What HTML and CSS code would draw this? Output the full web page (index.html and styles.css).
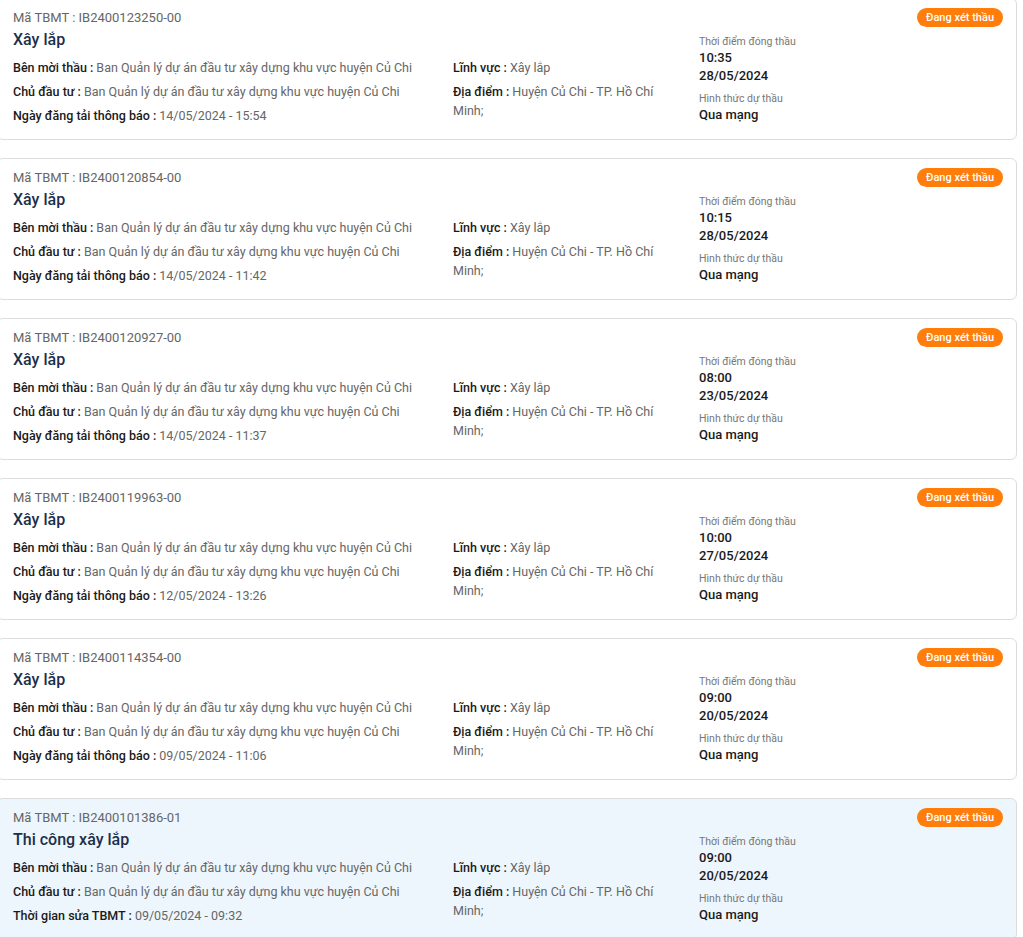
FILE: index.html
```html
<!DOCTYPE html>
<html lang="vi">
<head>
<meta charset="utf-8">
<title>Danh sách TBMT</title>
<link rel="stylesheet" href="styles.css">
</head>
<body>
<div class="list">

  <div class="card">
    <div class="main">
      <div class="code">Mã TBMT : IB2400123250-00</div>
      <div class="title">Xây lắp</div>
      <div class="fields">
        <div class="col-left">
          <div class="row"><b>Bên mời thầu :</b> Ban Quản lý dự án đầu tư xây dựng khu vực huyện Củ Chi</div>
          <div class="row"><b>Chủ đầu tư :</b> Ban Quản lý dự án đầu tư xây dựng khu vực huyện Củ Chi</div>
          <div class="row"><b>Ngày đăng tải thông báo :</b> 14/05/2024 - 15:54</div>
        </div>
        <div class="col-mid">
          <div class="row"><b>Lĩnh vực :</b> Xây lắp</div>
          <div class="row"><b>Địa điểm :</b> Huyện Củ Chi - TP. Hồ Chí Minh;</div>
        </div>
      </div>
    </div>
    <div class="side">
      <div class="badge-wrap"><span class="badge">Đang xét thầu</span></div>
      <div class="small">Thời điểm đóng thầu</div>
      <div class="strong">10:35</div>
      <div class="strong">28/05/2024</div>
      <div class="small gap">Hình thức dự thầu</div>
      <div class="strong">Qua mạng</div>
    </div>
  </div>

  <div class="card">
    <div class="main">
      <div class="code">Mã TBMT : IB2400120854-00</div>
      <div class="title">Xây lắp</div>
      <div class="fields">
        <div class="col-left">
          <div class="row"><b>Bên mời thầu :</b> Ban Quản lý dự án đầu tư xây dựng khu vực huyện Củ Chi</div>
          <div class="row"><b>Chủ đầu tư :</b> Ban Quản lý dự án đầu tư xây dựng khu vực huyện Củ Chi</div>
          <div class="row"><b>Ngày đăng tải thông báo :</b> 14/05/2024 - 11:42</div>
        </div>
        <div class="col-mid">
          <div class="row"><b>Lĩnh vực :</b> Xây lắp</div>
          <div class="row"><b>Địa điểm :</b> Huyện Củ Chi - TP. Hồ Chí Minh;</div>
        </div>
      </div>
    </div>
    <div class="side">
      <div class="badge-wrap"><span class="badge">Đang xét thầu</span></div>
      <div class="small">Thời điểm đóng thầu</div>
      <div class="strong">10:15</div>
      <div class="strong">28/05/2024</div>
      <div class="small gap">Hình thức dự thầu</div>
      <div class="strong">Qua mạng</div>
    </div>
  </div>

  <div class="card">
    <div class="main">
      <div class="code">Mã TBMT : IB2400120927-00</div>
      <div class="title">Xây lắp</div>
      <div class="fields">
        <div class="col-left">
          <div class="row"><b>Bên mời thầu :</b> Ban Quản lý dự án đầu tư xây dựng khu vực huyện Củ Chi</div>
          <div class="row"><b>Chủ đầu tư :</b> Ban Quản lý dự án đầu tư xây dựng khu vực huyện Củ Chi</div>
          <div class="row"><b>Ngày đăng tải thông báo :</b> 14/05/2024 - 11:37</div>
        </div>
        <div class="col-mid">
          <div class="row"><b>Lĩnh vực :</b> Xây lắp</div>
          <div class="row"><b>Địa điểm :</b> Huyện Củ Chi - TP. Hồ Chí Minh;</div>
        </div>
      </div>
    </div>
    <div class="side">
      <div class="badge-wrap"><span class="badge">Đang xét thầu</span></div>
      <div class="small">Thời điểm đóng thầu</div>
      <div class="strong">08:00</div>
      <div class="strong">23/05/2024</div>
      <div class="small gap">Hình thức dự thầu</div>
      <div class="strong">Qua mạng</div>
    </div>
  </div>

  <div class="card">
    <div class="main">
      <div class="code">Mã TBMT : IB2400119963-00</div>
      <div class="title">Xây lắp</div>
      <div class="fields">
        <div class="col-left">
          <div class="row"><b>Bên mời thầu :</b> Ban Quản lý dự án đầu tư xây dựng khu vực huyện Củ Chi</div>
          <div class="row"><b>Chủ đầu tư :</b> Ban Quản lý dự án đầu tư xây dựng khu vực huyện Củ Chi</div>
          <div class="row"><b>Ngày đăng tải thông báo :</b> 12/05/2024 - 13:26</div>
        </div>
        <div class="col-mid">
          <div class="row"><b>Lĩnh vực :</b> Xây lắp</div>
          <div class="row"><b>Địa điểm :</b> Huyện Củ Chi - TP. Hồ Chí Minh;</div>
        </div>
      </div>
    </div>
    <div class="side">
      <div class="badge-wrap"><span class="badge">Đang xét thầu</span></div>
      <div class="small">Thời điểm đóng thầu</div>
      <div class="strong">10:00</div>
      <div class="strong">27/05/2024</div>
      <div class="small gap">Hình thức dự thầu</div>
      <div class="strong">Qua mạng</div>
    </div>
  </div>

  <div class="card">
    <div class="main">
      <div class="code">Mã TBMT : IB2400114354-00</div>
      <div class="title">Xây lắp</div>
      <div class="fields">
        <div class="col-left">
          <div class="row"><b>Bên mời thầu :</b> Ban Quản lý dự án đầu tư xây dựng khu vực huyện Củ Chi</div>
          <div class="row"><b>Chủ đầu tư :</b> Ban Quản lý dự án đầu tư xây dựng khu vực huyện Củ Chi</div>
          <div class="row"><b>Ngày đăng tải thông báo :</b> 09/05/2024 - 11:06</div>
        </div>
        <div class="col-mid">
          <div class="row"><b>Lĩnh vực :</b> Xây lắp</div>
          <div class="row"><b>Địa điểm :</b> Huyện Củ Chi - TP. Hồ Chí Minh;</div>
        </div>
      </div>
    </div>
    <div class="side">
      <div class="badge-wrap"><span class="badge">Đang xét thầu</span></div>
      <div class="small">Thời điểm đóng thầu</div>
      <div class="strong">09:00</div>
      <div class="strong">20/05/2024</div>
      <div class="small gap">Hình thức dự thầu</div>
      <div class="strong">Qua mạng</div>
    </div>
  </div>

  <div class="card card-hl">
    <div class="main">
      <div class="code">Mã TBMT : IB2400101386-01</div>
      <div class="title">Thi công xây lắp</div>
      <div class="fields">
        <div class="col-left">
          <div class="row"><b>Bên mời thầu :</b> Ban Quản lý dự án đầu tư xây dựng khu vực huyện Củ Chi</div>
          <div class="row"><b>Chủ đầu tư :</b> Ban Quản lý dự án đầu tư xây dựng khu vực huyện Củ Chi</div>
          <div class="row"><b>Thời gian sửa TBMT :</b> 09/05/2024 - 09:32</div>
        </div>
        <div class="col-mid">
          <div class="row"><b>Lĩnh vực :</b> Xây lắp</div>
          <div class="row"><b>Địa điểm :</b> Huyện Củ Chi - TP. Hồ Chí Minh;</div>
        </div>
      </div>
    </div>
    <div class="side">
      <div class="badge-wrap"><span class="badge">Đang xét thầu</span></div>
      <div class="small">Thời điểm đóng thầu</div>
      <div class="strong">09:00</div>
      <div class="strong">20/05/2024</div>
      <div class="small gap">Hình thức dự thầu</div>
      <div class="strong">Qua mạng</div>
    </div>
  </div>

</div>
</body>
</html>
```
FILE: styles.css
```css
* { box-sizing: border-box; }
html, body { margin: 0; padding: 0; background: #fff; }
body {
  font-family: Roboto, "Noto Sans", sans-serif;
  color: #222;
  overflow: hidden;
}
.list {
  display: flex;
  flex-direction: column;
  gap: 18px;
  margin: -2px 6px 0 -3px;
}
.card {
  display: flex;
  border: 1px solid #dcdcdc;
  border-radius: 6px;
  background: #fff;
  height: 142px;
  padding: 10px 13px 0 15px;
}
.card-hl { background: #eef6fd; }
.main { width: 686px; flex: none; }
.code {
  font-size: 13px;
  line-height: 18px;
  color: #666;
}
.title {
  font-size: 16px;
  font-weight: 500;
  color: #1b2f4b;
  line-height: 26px;
}
.fields { display: flex; margin-top: 5px; }
.col-left { width: 440px; flex: none; }
.col-mid { width: 222px; flex: none; }
.row {
  font-size: 12.5px;
  line-height: 19px;
  color: #666;
  margin-bottom: 5px;
}
.row b { color: #1a1a1a; font-weight: 500; }
.side { flex: 1; display: flex; flex-direction: column; margin-top: -1px; }
.badge-wrap {
  display: flex;
  justify-content: flex-end;
  align-items: flex-start;
  height: 27px;
}
.badge {
  background: #ff7d0a;
  color: #fff;
  font-size: 11px;
  font-weight: 500;
  line-height: 19px;
  padding: 0 9px;
  border-radius: 10px;
}
.small {
  font-size: 10.5px;
  line-height: 14px;
  color: #777;
}
.small.gap { margin-top: 7px; }
.strong {
  font-size: 13px;
  font-weight: 500;
  line-height: 18px;
  color: #1a1a1a;
}
```
